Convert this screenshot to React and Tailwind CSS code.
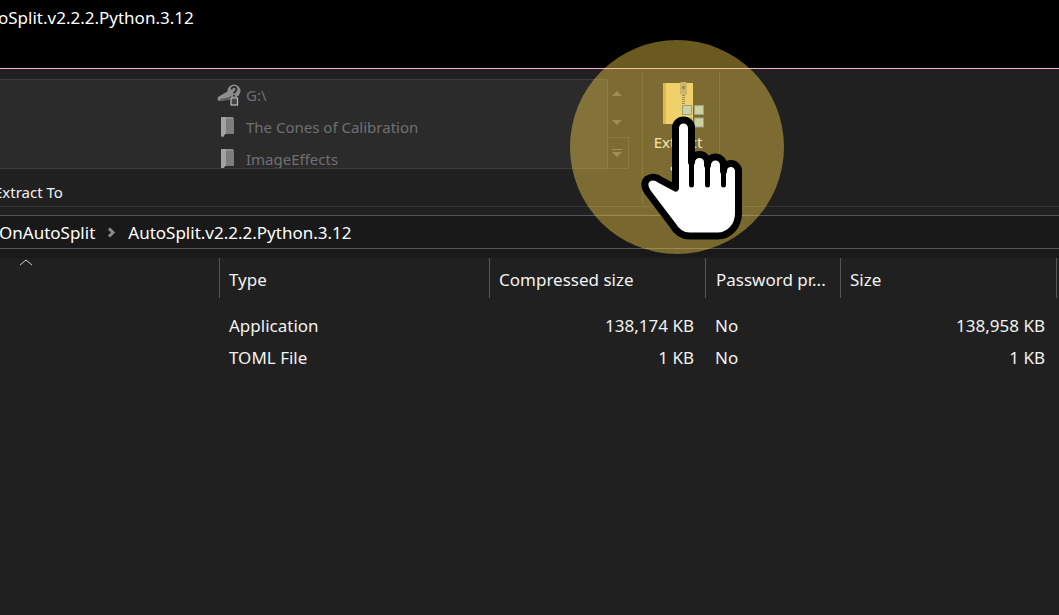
const font = { fontFamily: '"Noto Sans", sans-serif' };

const FolderIcon = () => (
  <svg width="16" height="22" viewBox="0 0 16 22" className="shrink-0">
    <path d="M1 1h12l1 2v15H5l-2 3-2-1z" fill="#8c8c8c" />
    <path d="M1 1h5v16l-3 4-2-1z" fill="#a2a2a2" />
    <path d="M6 3h8v15H6z" fill="#7d7d7d" />
  </svg>
);

const DriveIcon = () => (
  <svg width="24" height="22" viewBox="0 0 24 22" className="shrink-0">
    <path d="M1 13l12-7v9l-10 2c-2 0-3-2-2-4z" fill="#8f8f8f" />
    <path d="M3 15l10-2v3l-10 1z" fill="#5e5e5e" />
    <circle cx="17" cy="7" r="6.5" fill="#8c8c8c" />
    <path d="M14.5 5.5c0-3.500 5-3.500 5 0 0 2-2.500 2-2.500 4M17 11v1.500" stroke="#2b2b2b" strokeWidth="1.800" fill="none" />
    <rect x="14" y="14" width="6.500" height="7" fill="#444" stroke="#bdbdbd" strokeWidth="1.200" />
  </svg>
);

// colours are picked so they read right once the highlight circle sits on top
const ZipIcon = () => (
  <svg width="42" height="47" viewBox="0 0 42 47" className="shrink-0">
    <rect x="1" y="2" width="30" height="41" fill="#e5cb7c" />
    <rect x="1" y="2" width="3" height="41" fill="#cda451" />
    <rect x="18" y="1" width="7" height="13" rx="1.500" fill="#a99d83" />
    <rect x="20" y="5" width="3" height="3" fill="#5c5648" />
    <path d="M21.500 14v10" stroke="#5c5648" strokeWidth="3" strokeDasharray="1 1" />
    <rect x="20.500" y="24.500" width="9" height="9" fill="#a9cbdc" stroke="#4e7aac" />
    <rect x="32.500" y="24.500" width="9" height="9" fill="#a9cbdc" stroke="#4e7aac" />
    <rect x="20.500" y="37" width="9" height="9" fill="#a9cbdc" stroke="#4e7aac" />
    <rect x="32.500" y="37" width="9" height="9" fill="#a9cbdc" stroke="#4e7aac" />
  </svg>
);

const Arrow = ({ d }) => (
  <svg width="10" height="9" viewBox="0 0 10 9">
    <path d={d} fill="#5b5b5b" />
  </svg>
);

const Hand = () => (
  <svg
    width="214"
    height="215"
    viewBox="570 40 214 215"
    className="absolute left-[570px] top-[40px] pointer-events-none"
  >
    <circle cx="677" cy="147" r="107" fill="#ffd74c" fillOpacity="0.42" />
    <path
      d="M675.500 188V128a8 8 0 0 1 16 0v34a8 7.500 0 0 1 16 0v3a8 8 0 0 1 16 0v6a7.500 7.500 0 0 1 15 0v42c0 13-9 23-21 23h-28c-8 0-13-4-17-11l-25-33c-4-6-3-11 0-13 4-3 9-2 13 1z"
      fill="#fff"
      stroke="#000"
      strokeWidth="7"
      strokeLinejoin="round"
    />
    <path d="M691.500 160v25M707.500 162v23M723.500 168v17" stroke="#000" strokeWidth="5" strokeLinecap="round" />
  </svg>
);

const columns = "grid grid-cols-[219px_270px_216px_135px_216px_3px]";

const rows = [
  { type: "Application", compressed: "138,174 KB", password: "No", size: "138,958 KB" },
  { type: "TOML File", compressed: "1 KB", password: "No", size: "1 KB" },
];

export default function App() {
  return (
    <div className="relative h-[615px] w-[1059px] overflow-hidden bg-[#202020] text-[17px] text-[#f2f2f2]" style={font}>
      {/* Title bar */}
      <div className="h-[68px] bg-black pt-[5px] leading-[26px] text-white">
        <div className="-ml-[2px]">oSplit.v2.2.2.Python.3.12</div>
      </div>
      <div className="h-px bg-[#f3b2da]" />

      {/* Ribbon */}
      <div className="flex h-[138px] border-b border-[#333] text-[15px]">
        <div className="w-[642px] shrink-0">
          <div className="mt-[10px] flex h-[90px]">
            <div className="flex w-[608px] shrink-0 overflow-hidden border-y border-r border-[#3c3c3c] bg-[#2b2b2b] pl-[217px] text-[#707070]">
              <div className="-mt-[1px] flex flex-col">
                <div className="flex h-[32px] shrink-0 items-center gap-[5px]"><DriveIcon />G:\</div>
                <div className="flex h-[32px] shrink-0 items-center gap-[10px] pl-[3px]"><FolderIcon />The Cones of Calibration</div>
                <div className="flex h-[32px] shrink-0 items-center gap-[10px] pl-[3px]"><FolderIcon />ImageEffects</div>
              </div>
            </div>
            <div className="flex w-[21px] shrink-0 flex-col">
              <div className="flex h-[29px] items-center justify-center pr-[3px]"><Arrow d="M0 7h10L5 2z" /></div>
              <div className="flex h-[29px] items-center justify-center pr-[3px]"><Arrow d="M0 2h10L5 7z" /></div>
              <div className="flex h-[32px] items-center justify-center border border-l-0 border-[#363636] pr-[3px]"><Arrow d="M0 0h10v1H0zM0 3h10L5 8z" /></div>
            </div>
          </div>
          <div className="mt-[11px] -ml-[6px] leading-[24px]">Extract To</div>
        </div>
        <div className="mt-[3px] mb-[2px] flex w-[78px] shrink-0 flex-col items-center border-x border-[#3a3a3a] pt-[9px] pr-[6px]">
          <div className="ml-[10px]"><ZipIcon /></div>
          <div className="mt-[3px] leading-[23px]">Extract</div>
          <div className="leading-[23px]">all</div>
        </div>
      </div>

      {/* Address bar */}
      <div className="mt-[8px] flex h-[34px] items-center border-y border-[#555] bg-[#191919] pt-px text-white">
        <span className="-ml-px">OnAutoSplit</span>
        <svg width="9" height="11" viewBox="0 0 9 11" className="ml-[12px] mr-[12px]">
          <path d="M2 1.500l4 4-4 4" stroke="#8a8a8a" strokeWidth="3" fill="none" />
        </svg>
        <span>AutoSplit.v2.2.2.Python.3.12</span>
      </div>
      <div className="h-[9px] bg-[#191919]" />

      {/* Column headers */}
      <div className={`${columns} h-[40px] items-stretch`}>
        <div className="relative">
          <svg width="14" height="7" viewBox="0 0 14 7" className="absolute left-[19px] top-[1px]">
            <path d="M1 6l6-5 6 5" stroke="#cfcfcf" fill="none" />
          </svg>
        </div>
        <div className="flex items-center border-l border-[#555] pl-[9px] pt-[4px]">Type</div>
        <div className="flex items-center border-l border-[#555] pl-[9px] pt-[4px]">Compressed size</div>
        <div className="flex items-center border-l border-[#555] pl-[10px] pt-[4px]">Password pr...</div>
        <div className="flex items-center border-l border-[#555] pl-[9px] pt-[4px]">Size</div>
        <div className="border-l border-[#555]" />
      </div>

      {/* Files */}
      <div className="mt-[12px]">
        {rows.map((row) => (
          <div key={row.type} className={`${columns} h-[32px] items-center`}>
            <div />
            <div className="pl-[10px]">{row.type}</div>
            <div className="pr-[11px] text-right">{row.compressed}</div>
            <div className="pl-[10px]">{row.password}</div>
            <div className="pr-[11px] text-right">{row.size}</div>
          </div>
        ))}
      </div>

      <Hand />
    </div>
  );
}
